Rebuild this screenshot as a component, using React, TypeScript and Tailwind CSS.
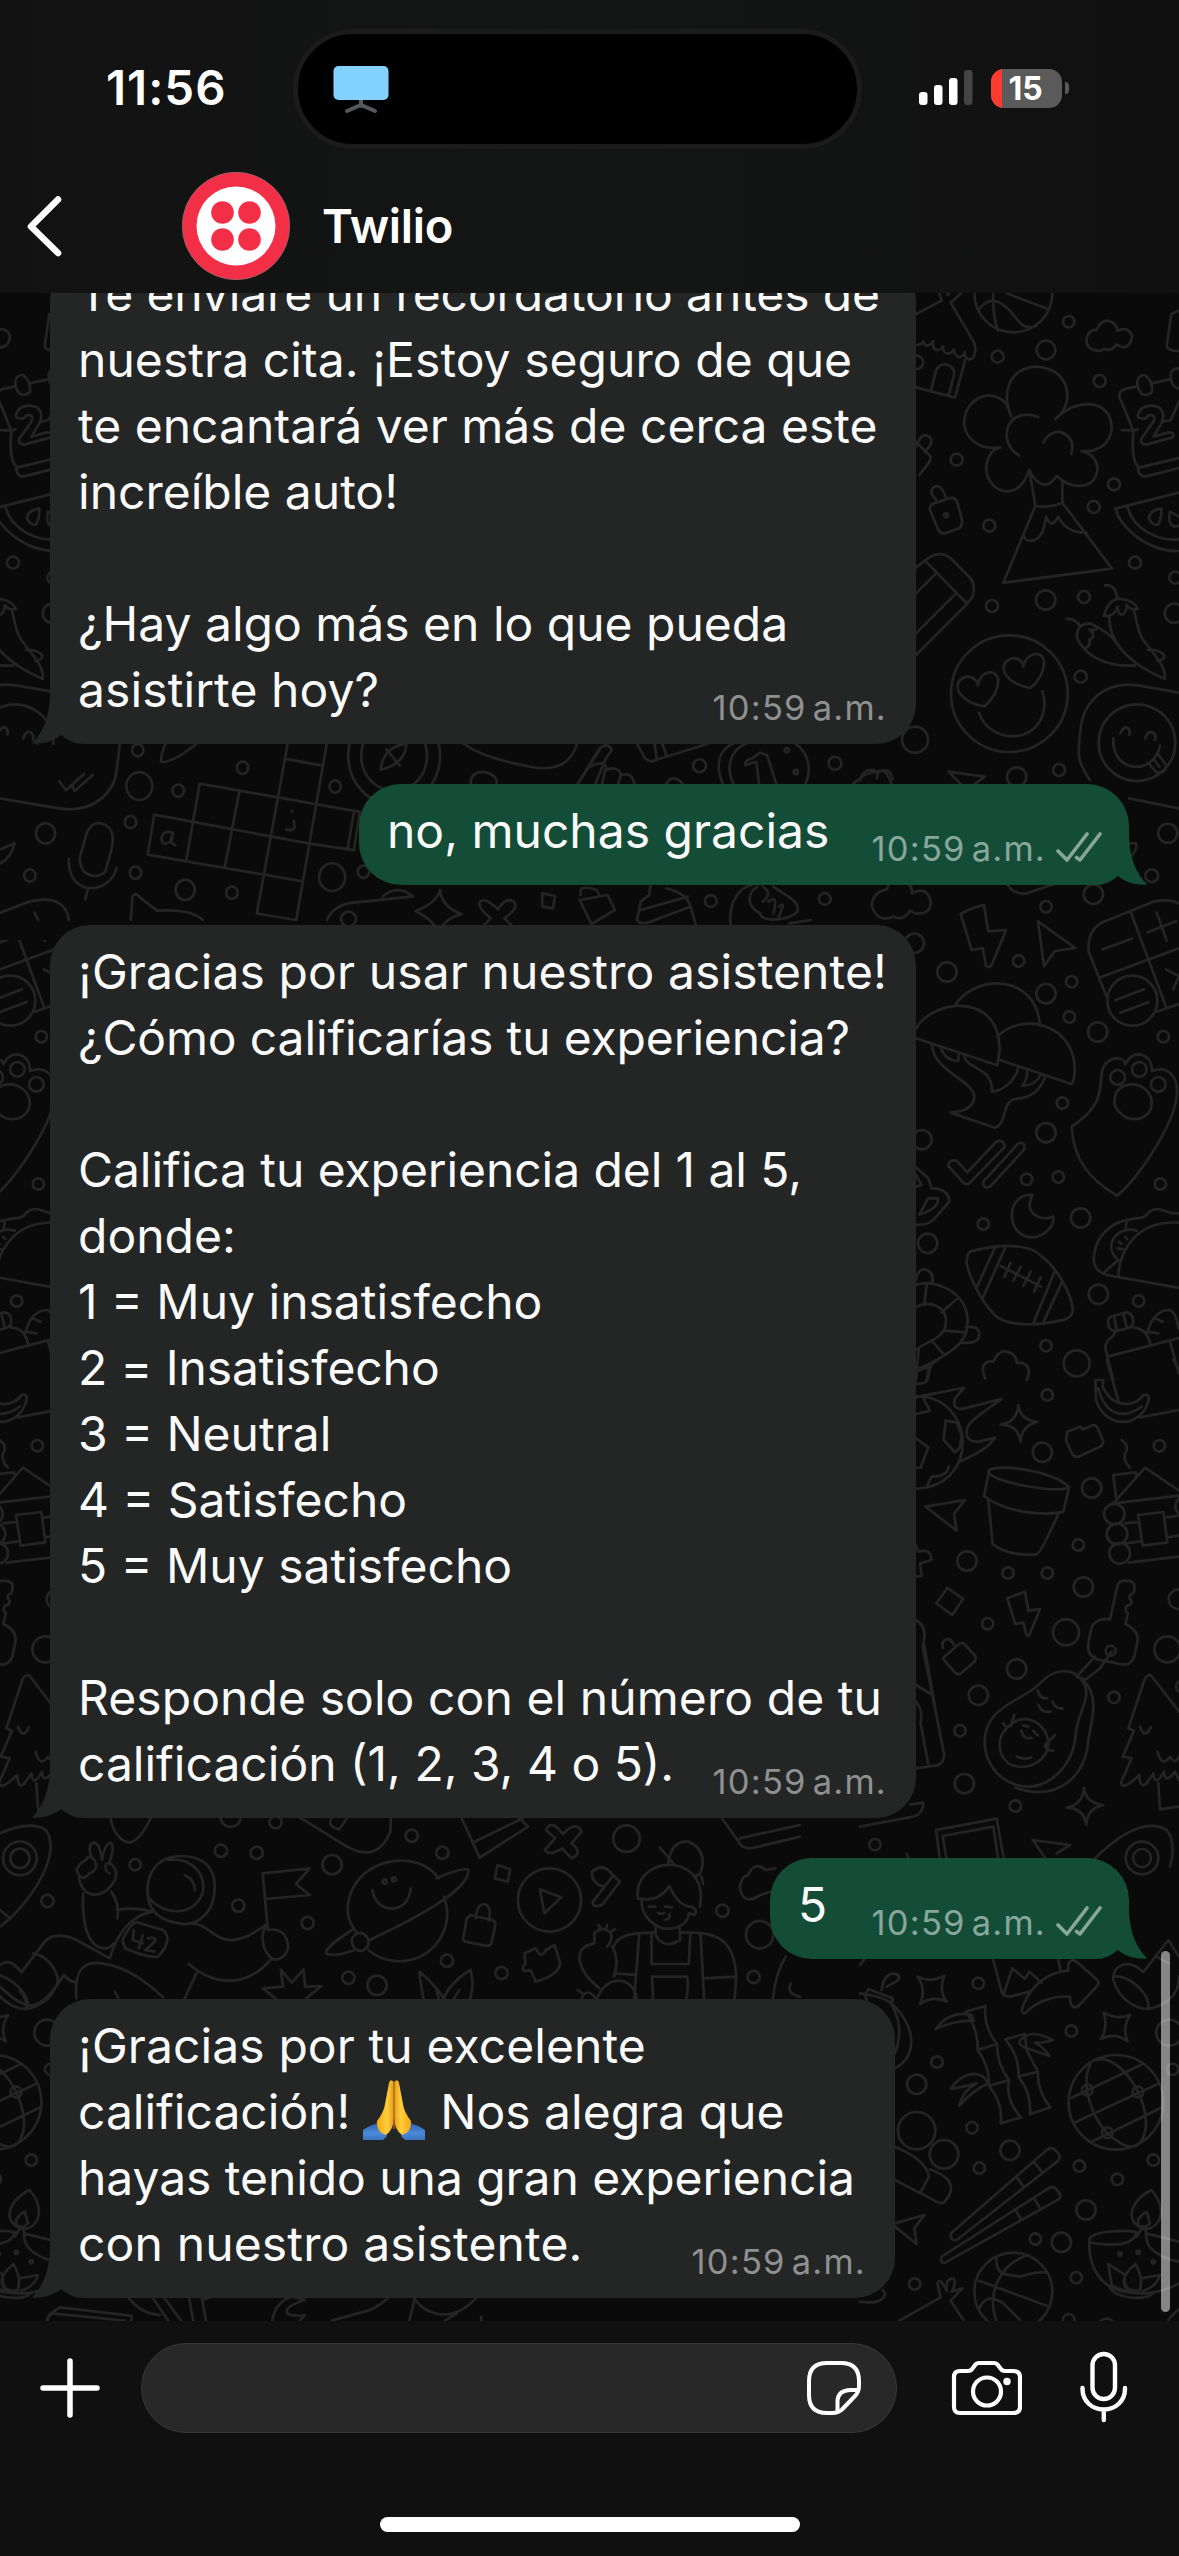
import type { ReactNode } from "react";

type Circle = [number, number, number];

function Dots({ items }: { items: Circle[] }) {
  return (
    <>
      {items.map(([x, y, r], i) => (
        <circle key={i} cx={x} cy={y} r={r} vectorEffect="non-scaling-stroke" />
      ))}
    </>
  );
}

function Lines({ items }: { items: string[] }) {
  return (
    <>
      {items.map((d, i) => (
        <path key={i} d={d} vectorEffect="non-scaling-stroke" />
      ))}
    </>
  );
}

/* Upper right: house, cloud volcano, padlock, calendar, melon, chillies, faces */
const upperDots: Circle[] = [
  [460, 40, 117], [626, 125, 17], [558, 210, 28], [413, 230, 18], [719, 303, 18], [290, 539, 18],
  [388, 737, 18], [762, 613, 18], [701, 681, 18], [825, 848, 18], [946, 893, 18], [943, 1000, 29],
  [396, 978, 18], [557, 960, 29], [672, 951, 18], [662, 1190, 18], [165, 1379, 39], [448, 1241, 175],
  [597, 1470, 18], [470, 1491, 29], [170, 247, 20], [831, 1388, 115], [258, 706, 6], [-30, 190, 20],
];
const upperLines = [
  "M400 30C398 80 402 120 414 152M355 92C380 50 415 55 450 92C480 130 490 150 530 138M440 40L562 86",
  "M0 190L245 62L238 40M262 45L268 40M308 35L272 68L332 170Q350 195 345 215Q342 240 326 238Q313 232 314 217Q308 235 294 230Q282 222 282 209Q270 226 255 218Q247 210 250 200Q235 217 223 206Q216 195 220 184Q205 202 195 194L190 184Q184 196 168 195",
  "M160 320L285 353L316 238M213 331L228 272Q238 250 262 254Q286 264 282 285L266 347",
  "M712 212Q678 208 679 178Q686 148 710 150Q722 120 745 122Q770 130 773 152Q806 138 816 168Q814 200 788 202L768 194Q752 218 732 206Q724 215 712 212Z",
  "M957 92L934 102L920 198Q922 212 957 213",
  "M454 410C425 350 440 262 532 260C630 270 640 360 600 405L586 417C650 350 755 358 755 445C752 490 715 518 665 513C710 525 720 560 707 590C690 625 635 630 590 588C565 625 535 625 508 570C490 620 465 634 441 634C385 632 355 555 402 510L422 502C340 515 308 455 313 420C320 350 400 320 441 375Z",
  "M534 411C480 390 440 420 440 465C440 490 455 515 477 526M550 487Q568 455 598 455Q648 470 634 522M508 570L526 678L430 908L756 866L607 668V603M526 678Q570 684 607 668M490 765Q495 784 514 782Q550 780 558 710Q575 750 594 710Q620 760 680 758",
  "M168 500L180 476Q190 460 208 470Q220 480 208 500L194 516M168 486L212 530L208 546L178 585",
  "M228 660L214 640Q215 618 232 618Q246 620 258 652M215 673L270 654Q286 650 292 668L306 720Q308 735 298 745L256 760Q242 762 235 750L210 690Q208 678 215 673Z",
  "M785 450L820 452L778 350Q776 330 800 326L828 320M874 310L930 298M820 452C815 520 820 555 840 562L957 534M834 565Q836 588 855 590L957 564M820 452L833 448",
  "M832 305Q835 284 855 285Q880 305 876 335Q864 350 846 342Q830 325 832 305ZM932 285Q935 264 955 265Q980 285 976 315Q964 330 946 322Q930 305 932 285Z",
  "M845 415Q822 415 845 385Q870 370 897 382Q918 400 904 430L880 470L926 457Q946 458 938 472L858 494Q838 492 845 475L880 425Q890 402 866 406L855 416ZM957 365L932 420L910 425",
  "M957 638L766 686C780 740 860 815 957 813M802 680C820 750 900 785 957 778M904 685Q870 690 866 715Q880 740 895 732Q905 715 904 685ZM930 695Q922 735 945 740Q975 735 960 712Z",
  "M168 862L195 842Q240 805 275 838L330 893Q348 915 338 950L318 975L168 1125M195 842L322 972M228 880L168 940M288 940L168 1060",
  "M735 916Q765 910 772 955M732 1008Q745 955 782 957Q822 960 834 987Q810 992 800 975Q800 1000 785 1005Q773 1000 773 980Q762 1012 732 1008M748 1010C745 1100 830 1160 914 1197C922 1160 870 1110 850 1080C830 1050 830 1020 822 990M864 1110Q900 1108 914 1128Q910 1142 892 1142",
  "M620 1017Q645 1014 660 1038M672 1105C635 1070 650 1030 690 1030L716 1043Q700 1055 688 1048Q712 1070 688 1078Q695 1100 672 1105C720 1160 800 1158 826 1156M716 1043Q745 1060 768 1085",
  "M374 1279C310 1270 275 1225 302 1198C325 1180 350 1195 354 1216C360 1170 410 1165 415 1200C415 1235 395 1260 374 1279ZM512 1224C448 1215 413 1170 440 1143C463 1125 488 1140 490 1160C498 1115 548 1110 552 1145C553 1180 533 1205 512 1224ZM357 1298C385 1390 540 1400 553 1280Q555 1255 547 1234",
  "M957 1238L835 1216C730 1200 670 1270 662 1345C650 1430 655 1450 690 1500M781 1360Q790 1338 802 1343Q812 1350 808 1365M856 1375Q864 1350 878 1357Q890 1365 885 1380M760 1375C755 1480 880 1490 900 1397M864 1448L890 1478Q920 1480 918 1455L893 1420M880 1436L898 1460",
  "M265 1475L375 1490L320 1530ZM0 1500Q10 1465 40 1470Q60 1475 50 1495M50 1480Q90 1455 98 1498",
];

/* Middle right: bolt, tree, paw, moon, football, taco */
const middleDots: Circle[] = [
  [163, 190, 29], [261, 276, 29], [558, 80, 17], [700, 43, 29], [476, 243, 17], [558, 341, 29], [635, 305, 17],
  [628, 411, 17], [713, 456, 29], [910, 470, 17], [607, 669, 17], [558, 758, 29], [186, 779, 29], [500, 898, 17],
  [595, 891, 17], [901, 912, 17], [370, 1032, 17], [662, 1014, 29], [203, 1090, 29], [715, 1243, 29], [836, 1263, 17],
  [558, 1397, 17], [650, 1450, 39], [817, 362, 75], [773, 592, 22], [838, 568, 22], [895, 613, 22],
];
const middleLines = [
  "M80 28Q90 -5 125 0Q158 10 156 40Q200 15 212 65Q212 105 165 100L150 92Q128 125 100 110Q50 130 35 75Q40 35 80 28ZM440 10Q460 45 500 40L590 10",
  "M302 102Q340 80 372 75L385 154L438 150L395 255Q388 265 378 258L368 204L335 210ZM534 124L646 204L585 213L552 258Z",
  "M957 372L890 395M740 350L686 215Q680 140 745 120L880 65Q930 55 957 70M812 95L918 380M722 292L957 205M728 208L815 176M863 157L948 124M890 98L920 182M918 268L957 288L940 328M767 360L852 328M781 398L866 366",
  "M285 376C345 280 530 280 540 438M168 445C225 350 430 340 418 520L412 556L168 475M412 470C490 390 660 435 643 590L636 613L420 540",
  "M215 495C225 580 345 600 343 655C335 690 300 695 272 698L405 743C440 735 425 665 465 657C525 655 545 620 555 590M313 528C320 570 400 560 396 636C440 630 470 590 475 562M243 505Q255 540 295 543L296 520M502 570Q502 600 487 617Q525 618 542 585",
  "M635 740C740 670 715 620 728 565C745 530 790 525 796 553C820 500 880 525 876 573C925 555 957 590 950 650C940 740 830 900 771 947C690 900 640 840 635 740Z",
  "M765 650C775 605 830 605 858 630C885 655 880 700 845 713C800 730 755 690 765 650Z",
  "M265 858Q264 838 290 842L322 877L408 786Q430 775 435 800L330 908Q320 918 308 906ZM370 905L475 790Q496 783 493 808L392 918Q368 930 370 905Z",
  "M517 945C435 940 435 1070 517 1072C555 1070 585 1035 580 1010C540 1025 490 1000 517 945Z",
  "M168 862L205 895L215 925Q265 925 268 965L220 1020Q195 1038 168 1034M168 885L185 915L168 920M204 955H234Q238 985 178 1004ZM168 1200Q175 1165 195 1168Q220 1172 218 1210",
  "M168 1214C230 1195 320 1240 323 1320C325 1410 240 1420 208 1460L168 1474M168 1280C210 1260 260 1280 258 1325C255 1380 200 1380 168 1410M200 1212L193 1275M290 1258L245 1297M320 1357L250 1352M252 1424L218 1385M318 1342Q358 1335 358 1365Q355 1395 300 1387M176 1410L168 1500M208 1460L200 1500",
  "M330 1115C420 1090 510 1090 545 1130C590 1160 635 1245 638 1285Q640 1310 615 1318C530 1340 430 1340 400 1300C360 1260 325 1180 320 1150Q320 1120 330 1115ZM405 1103L350 1222M437 1100L368 1255M585 1172L520 1330M605 1208L550 1327M422 1158L543 1220M452 1148L433 1190M482 1160L460 1203M512 1175L490 1218M542 1192L522 1235",
  "M957 1224L740 1185Q695 1170 702 1125C710 1060 760 1025 810 1018C840 1010 850 1020 865 998C900 970 915 1005 957 1000M775 1185C780 1110 830 1020 957 1028M830 1052C770 1035 725 1100 775 1140L735 1175M800 1020L797 1048M776 1085L785 1092M772 1105L790 1108M795 1070L802 1077",
  "M368 1470Q370 1440 400 1445Q415 1410 440 1415Q468 1420 470 1448Q505 1445 507 1478L500 1500M368 1470L375 1495",
  "M745 1330Q742 1310 760 1308L800 1297Q820 1300 820 1325Q820 1340 800 1345L765 1354Q745 1350 745 1330ZM762 1308L770 1350M790 1300L800 1343M765 1355L760 1368Q735 1385 736 1405L760 1500M820 1343Q860 1345 870 1390M742 1430L957 1374M862 1358Q880 1290 930 1290Q950 1300 955 1345M862 1355L895 1360M885 1315L908 1325M930 1385L957 1480",
];

/* Lower right: comet, pot, cabin, key ring, avocado, pine */
const lowerDots: Circle[] = [
  [562, 105, 17], [547, 277, 29], [898, 257, 17], [695, 384, 29], [655, 555, 17], [321, 603, 29], [444, 639, 17],
  [562, 639, 17], [670, 681, 29], [955, 718, 29], [383, 791, 17], [618, 817, 39], [922, 868, 39], [470, 927, 29],
  [355, 1006, 29], [762, 1012, 17], [300, 1112, 17], [313, 1271, 29], [466, 1338, 17], [45, 1454, 17], [763, 462, 31],
  [771, 522, 31], [779, 580, 31], [752, 872, 15], [846, 1494, 49], [846, 1494, 27], [965, 980, 17],
];
const lowerLines = [
  "M168 30L232 0M168 70Q205 75 205 45L212 20M168 112C230 100 270 90 312 84L285 115Q275 150 310 146L424 117L345 175C300 215 320 250 360 244L405 233C380 270 340 285 300 305M168 108C350 110 360 380 168 386M190 115L210 152L168 162M168 235L205 262L182 323L168 324M257 182L290 188L305 225L300 262L285 277L251 240ZM266 320Q260 350 215 350L200 380",
  "M475 135Q480 180 533 186Q485 195 482 246Q475 195 422 194Q472 185 475 135ZM672 1284Q677 1329 730 1335Q682 1344 679 1395Q672 1344 619 1343Q669 1334 672 1284Z",
  "M197 440L315 420L282 462L290 512Z",
  "M388 330L372 408C430 455 550 470 610 455L627 382C590 340 440 310 388 330C360 360 600 405 627 382M385 420L398 553Q450 590 530 583Q540 583 595 462",
  "M622 215L660 200L670 208L700 195Q710 195 714 207L730 245L725 258L655 290Q642 292 636 280L618 242Z",
  "M740 0L776 125M706 60H730L728 80C760 150 830 140 850 105Q868 100 866 118C850 200 740 215 708 120ZM715 85C735 165 790 180 845 140M957 150L840 172M940 0L957 30",
  "M785 240Q810 260 795 280Q790 305 810 323M768 410L760 345L828 337L830 352M760 430L855 323L957 392M760 430L957 407M795 490L835 486M790 551L842 544M805 608L957 590M834 465L910 456L922 547L848 557ZM915 473L957 467M920 532L957 527M957 415Q935 440 957 462",
  "M750 778L773 675Q780 655 815 665Q830 672 820 700Q800 708 815 722Q815 735 800 738Q792 752 804 760L796 792Q835 810 833 840L823 890Q810 920 780 912L710 898Q680 885 685 850L695 800Q715 770 750 778ZM705 890L650 950L675 960L720 925L755 875",
  "M168 555L175 575Q215 565 214 600L180 610L185 648L168 650M229 730L262 684L309 716L277 765ZM442 715L495 695L505 752L540 747L508 825Q500 832 498 820L490 787L466 792Z",
  "M250 865Q240 840 265 837Q280 845 285 860M250 893L300 850Q312 846 320 860L346 888Q350 900 340 908L300 942Q288 945 280 932L252 900Z",
  "M168 780Q200 800 192 840L188 860L252 1180Q255 1210 230 1216L168 1225M168 975L218 1005M168 1025Q190 1050 182 1090L205 1215M192 850L230 1070",
  "M540 970C580 925 640 920 668 965C700 1010 650 1060 648 1120C640 1220 560 1300 470 1275C370 1245 345 1120 410 1060C450 1020 500 1010 540 970ZM670 960C720 1010 695 1080 685 1140C680 1240 600 1330 465 1283",
  "M430 1090Q435 1105 452 1098L463 1065M445 1100C410 1130 410 1180 445 1210C500 1240 570 1200 565 1145C555 1080 485 1055 445 1100M585 1125L555 1155Q555 1165 565 1170L580 1172M533 992Q540 1018 562 1015M535 1035Q545 1060 572 1055M578 1025Q585 1048 607 1045M484 1112Q490 1140 514 1134M490 1096L505 1100M520 1113L533 1126M470 1190Q490 1200 513 1193",
  "M957 1055L875 948Q862 940 853 960L805 1105L822 1112L788 1190L815 1195L783 1268Q785 1295 838 1245Q840 1290 860 1270L880 1240Q885 1285 912 1235Q915 1275 945 1235L957 1260M895 1270L900 1348L957 1340M840 1100Q855 1140 872 1102M893 1175Q905 1225 930 1190Q945 1215 957 1190",
  "M0 1400L160 1370Q190 1360 190 1328L150 1333M240 1500L228 1410L410 1376L432 1500M260 1500L248 1428L400 1400L415 1500M518 1440L630 1455L590 1480M518 1440L560 1500M700 1500C780 1420 860 1375 920 1410Q950 1450 930 1520M140 1482L148 1500",
];

/* Bottom right: bamboo, globe, chopsticks, oil lamp, basketball */
const bottomDots: Circle[] = [
  [355, 130, 17], [231, 366, 17], [170, 433, 29], [634, 273, 17], [928, 278, 39], [938, 388, 17], [336, 563, 17],
  [450, 631, 29], [358, 684, 17], [170, 572, 56], [252, 643, 43], [658, 678, 17], [880, 660, 17], [772, 718, 17],
  [678, 810, 29], [526, 897, 17], [604, 907, 29], [649, 1013, 17], [164, 1032, 17], [460, 1055, 117], [768, 487, 142],
  [682, 450, 16], [834, 456, 16], [742, 578, 16], [626, 1139, 17], [740, 1162, 26], [780, 942, 5], [835, 937, 5], [880, 965, 5],
];
const bottomLines = [
  "M173 110Q210 130 253 107Q235 150 260 185Q220 165 180 192Q200 150 173 110ZM731 218Q768 240 810 225Q785 265 803 304Q765 275 723 297Q745 260 731 218Z",
  "M20 180L15 165L25 147L98 175L95 195M0 160Q80 170 105 200C170 270 170 350 105 385M95 195Q135 260 105 340M65 150Q70 105 100 100Q130 105 108 125L80 140",
  "M400 60L425 155Q430 170 450 170L510 155M430 165L457 85L495 117L508 95L545 128M595 60L603 95M487 215C480 205 520 100 625 92V70Q635 55 650 65L712 120Q720 130 710 140L655 198Q630 212 630 170C570 165 520 195 500 215Q490 225 487 215Z",
  "M957 50L925 0L850 96C800 50 755 80 760 120C780 190 850 220 890 200C940 180 957 150 957 110M890 50L925 70M762 110C800 100 870 160 865 200",
  "M318 215L376 198Q370 260 411 312Q410 370 447 420Q435 480 483 532L422 550Q430 490 387 438Q390 380 353 330Q355 280 330 235ZM353 330L411 312M387 438L447 420M436 298L495 282L500 330Q520 370 534 395Q530 450 571 502L510 523Q515 460 475 410Q480 350 436 298ZM475 410L534 395M227 267Q270 210 335 225L342 242Q285 240 227 267ZM272 447C310 390 365 390 385 430Q340 450 298 497Q310 450 350 430Q310 440 272 447ZM578 300Q520 270 495 290Q460 310 500 325L568 348Q555 325 525 308Q550 310 578 300Z",
  "M635 473L847 373M646 547L898 430M695 605L904 503M690 375C660 440 700 560 775 605Q800 625 825 618M710 360C760 340 860 440 858 560Q850 610 825 618",
  "M105 620Q200 660 207 710L182 755M105 720L230 785Q250 795 258 780C290 740 270 710 210 688M105 850L193 825L163 865L170 912L105 860",
  "M273 880L560 630Q575 618 590 633L600 650L595 662L290 900Q270 905 273 880ZM523 667L545 695M471 713L492 742M245 950L565 745Q580 735 592 750L602 768L596 778L255 968Q238 970 245 950ZM522 775L540 804M465 808L482 837",
  "M688 905C680 870 800 870 830 877Q820 918 740 913Q695 912 688 905C685 980 720 1040 790 1055C870 1070 920 1050 957 1030M830 890L848 862M858 862Q855 900 870 922Q900 955 957 965M858 880L957 905M855 867C790 850 810 780 875 750C925 810 900 865 855 867M860 815Q825 835 837 857Q855 865 870 850ZM745 972L795 1005Q790 1040 812 1052Q770 1050 755 1035ZM826 972Q850 1010 840 1050Q820 1058 795 1040Q780 1010 826 972ZM845 1015L900 1005Q890 1040 848 1053M748 1040C760 1075 860 1085 878 1060",
  "M410 950Q405 1005 450 1005C500 1020 500 990 562 998M505 945C420 970 380 1060 408 1140M357 1022L562 1098M358 1105Q380 1055 430 1090L480 1140",
  "M118 1142L242 1072L232 1030Q240 1010 260 1052Q255 1015 280 1015Q290 1030 275 1055L307 1045L272 1082L310 1140M0 1085Q70 1095 75 1060L68 1050M925 1140L940 1122L957 1108M0 75L15 55",
];

/* Upper left: speech bubble tail, ticks, crossword, microphone, compass */
const leftDots: Circle[] = [
  [360, 1152, 15], [364, 1240, 34], [466, 1251, 15], [634, 1195, 15], [876, 1241, 15], [341, 1328, 15], [119, 1356, 25],
  [78, 1459, 15], [354, 1452, 15], [484, 1494, 25], [606, 1501, 15], [868, 1463, 34], [950, 1450, 15], [1030, 1166, 120], [1030, 1166, 86],
];
const leftLines = [
  "M0 1270L150 1294C250 1310 300 1250 305 1200L314 1130M155 1228L172 1250L220 1210M190 1242L195 1252L243 1212",
  "M753 1130L671 1552L774 1568L855 1130M748 1174L841 1189M522 1234L940 1303L925 1397M522 1234L487 1420M626 1250L588 1436M403 1310L810 1381L925 1397M386 1408L403 1310M386 1408L790 1473M926 1300L908 1395",
  "M420 1180Q425 1140 440 1130M420 1180Q450 1185 515 1135M995 1200Q1000 1145 1062 1136Q1060 1185 995 1200ZM1010 1150L1045 1190M1205 1130Q1250 1170 1400 1195Q1490 1205 1510 1130M1510 1235L1568 1150M1230 1235Q1230 1205 1262 1205Q1300 1210 1298 1235",
  "M225 1360Q240 1320 275 1335Q305 1350 290 1400L275 1450Q250 1470 220 1450Q205 1430 210 1410ZM180 1418C175 1510 285 1510 305 1440M230 1490L223 1518M0 1395L38 1380Q30 1415 0 1430M0 1550L70 1525Q170 1500 180 1568M90 1550L100 1568",
  "M342 1568L346 1510Q355 1498 365 1512L410 1545Q500 1540 530 1568M855 1568Q870 1530 930 1525L1080 1510M1000 1510Q1040 1480 1078 1510",
  "M452 1355Q425 1345 422 1370Q425 1390 445 1375L452 1355L448 1378L458 1385M764 1302V1304M768 1325L770 1340Q765 1352 748 1346",
];

/* Strip around the first outgoing message */
const middleStripDots: Circle[] = [
  [672, 137, 12], [925, 130, 12], [693, 543, 11], [906, 537, 11], [16, 597, 14], [835, 91, 4], [852, 156, 4], [1547, 340, 18], [1517, 467, 12],
];
const middleStripLines = [
  "M445 190L485 85Q500 65 508 90L495 120L478 190M468 140Q490 120 497 140L490 190M497 150Q520 135 525 165L520 190M525 165Q545 155 550 190M555 70L570 115Q580 130 590 120L690 70M588 72L592 118M602 70L610 105",
  "M715 190C700 130 710 90 735 70M850 70C880 100 880 160 870 190M735 190C720 140 730 90 760 70M758 135Q755 120 770 115L785 98L798 105L815 190M758 135L778 125L783 190M610 190Q623 160 640 190M960 190L980 165Q995 155 1005 155Q1020 140 1030 190",
  "M187 510Q190 560 227 582Q190 600 186 640Q175 600 141 573Q180 550 187 510ZM262 545Q270 530 295 568Q310 530 325 545Q335 565 307 595L320 614M262 545Q255 560 282 595L270 614M378 520L402 528L398 565L378 560ZM448 540L500 525L514 570L470 612ZM450 525Q445 490 480 510L485 528",
  "M580 495L578 525L562 545L555 600Q560 615 580 605L655 560Q650 520 610 505M562 570L650 530M655 560L665 614M730 614C725 540 750 500 770 495M780 500C760 520 760 560 785 580C790 610 840 600 855 575C860 540 830 525 810 500M790 500Q810 520 790 545M800 545Q820 520 810 580M820 560Q835 540 820 590M840 610L880 600",
  "M1475 235L1568 265M1475 370L1488 370Q1490 390 1478 410",
];

/* Strip with astronaut, planet and gardener */
const strollDots: Circle[] = [
  [265, 314, 11], [433, 272, 12], [503, 278, 12], [651, 314, 19], [807, 227, 12], [867, 278, 12], [467, 437, 12], [603, 489, 12],
  [93, 423, 12], [1228, 236, 26], [1077, 420, 62], [876, 602, 12], [683, 653, 12], [739, 676, 19], [983, 639, 12],
  [1416, 452, 12], [1477, 651, 12], [1489, 524, 27], [452, 170, 20], [540, 187, 12], [754, 365, 4], [772, 358, 4],
  [39, 295, 33], [39, 295, 19],
];
const strollLines = [
  "M217 175C220 215 240 250 255 247Q275 240 295 175M580 165L680 260Q740 310 765 215L766 175M650 175Q640 200 665 208L680 175",
  "M905 175L940 293L1035 200L1012 165M930 245L1025 175M1070 210Q1080 175 1103 222Q1130 180 1140 215L1120 250Q1145 280 1120 295L1102 265Q1075 290 1068 270L1088 235Z",
  "M1415 175L1450 250Q1455 268 1475 264L1568 230M1450 235L1568 195",
  "M180 295Q170 250 185 248Q195 250 200 300Q205 250 218 248Q225 265 215 305M185 300Q175 280 168 300Q155 310 150 330Q160 370 175 340Q195 330 185 300M155 345C155 410 200 430 225 360C235 320 210 300 207 315Q205 335 215 340M163 400C160 480 170 570 210 565Q220 560 222 550M218 395Q235 430 230 475",
  "M355 288C410 290 425 340 420 400C415 470 380 500 350 490C300 480 285 430 290 370Q300 290 355 288M330 300C380 290 405 350 397 400C380 470 320 470 290 410M362 345Q382 360 382 390",
  "M230 450Q260 440 300 455Q240 470 215 595L150 540Q105 510 85 550L42 637Q20 590 0 615M240 540Q260 480 270 488L320 510Q340 540 310 590Q290 595 245 565ZM262 510L260 540L280 550M280 525L272 565M290 535Q310 530 303 545L285 570L303 575M375 490C420 490 430 600 520 495M515 340L525 510Q560 500 565 560Q560 600 535 598C510 570 510 510 525 495M515 340L607 325L580 372L607 405L520 417",
  "M65 580C100 590 120 650 110 680C70 760 50 750 0 680M0 645C40 670 60 720 52 745M370 612C430 690 490 670 530 600M385 640L362 715M150 715C145 640 160 600 200 610C250 620 290 670 320 712M110 680L125 645Q140 670 150 665M225 695L232 715",
  "M860 355C820 270 720 290 690 390C670 460 690 500 700 520M722 570C760 620 830 620 865 530Q885 470 870 410M855 355Q910 320 918 330C920 380 850 450 725 540M690 510C650 550 635 570 640 582Q660 590 695 570M705 518Q725 525 722 555Q710 585 695 565Q680 530 705 518ZM730 390C735 460 800 470 805 385",
  "M515 685L555 680L550 628L572 668L595 628L598 680L630 678L600 715M515 685L540 715M822 635Q850 670 870 715M822 635Q825 680 830 715M922 630Q880 670 870 715M922 630Q930 670 922 715M855 690L860 715M900 690L890 715",
  "M975 315L1000 328L995 365L970 355ZM933 475Q935 430 950 433Q965 440 958 482M922 465L965 480Q973 485 970 500L963 550Q960 560 948 556L912 545Q905 540 909 525L915 475ZM1058 388L1100 412L1067 460ZM1160 335Q1180 310 1195 335L1215 365L1180 435Q1160 445 1162 425L1200 350M1160 335Q1160 370 1182 380",
  "M1028 580L1050 565Q1060 600 1070 570L1087 555L1098 610Q1095 645 1050 665L1040 630Q1015 640 1030 610Z",
  "M1310 310Q1315 240 1350 245Q1385 270 1375 330Q1370 350 1365 345M1293 262L1320 310M1375 350L1378 372M1250 415C1245 350 1280 310 1320 315C1360 325 1380 370 1372 440M1250 415Q1290 430 1312 378Q1330 440 1355 440Q1370 450 1360 465L1350 460C1350 500 1310 520 1285 495C1260 470 1257 440 1258 420M1285 500L1285 525Q1300 570 1333 540L1332 500M1272 440L1285 440M1303 440L1317 442M1290 458Q1295 465 1302 458M1312 462Q1315 478 1303 480",
  "M1285 518Q1210 515 1203 560M1335 518C1420 510 1440 560 1443 650L1380 655M1443 650L1440 715M1205 640L1245 645M1253 520L1243 715M1373 520L1380 715M1277 520L1277 612H1350L1353 520M1278 650H1347Q1350 690 1345 715M1278 650L1280 715M1165 520Q1180 495 1198 520Q1200 545 1190 560M1165 520V550C1120 560 1130 630 1175 685M1200 560Q1215 600 1203 650M1170 715Q1190 650 1225 665Q1245 680 1248 715M1140 715Q1150 680 1168 715M1172 495L1178 505M1190 495L1188 505M1205 508L1198 514M1132 690L1142 700",
  "M1450 380Q1455 345 1465 348Q1480 300 1500 330L1520 325M1450 380Q1455 440 1490 405L1510 395M1540 590Q1520 640 1515 715M1550 670Q1540 700 1568 710",
  "M0 220Q60 180 90 210C120 280 70 400 20 475L0 450M0 500L20 475",
];

/* Strip just above the composer */
const baseLines = [
  "M385 292Q420 340 480 345M457 292L505 362M492 292L543 362M567 292L580 362M605 292L618 362M610 300L630 292M143 362Q140 345 160 335L180 322L390 347Q400 350 393 362M155 340L375 362",
  "M817 362Q825 310 870 292M885 292L915 300Q850 320 862 340Q880 352 915 345L900 362M995 362L1110 330Q1150 310 1165 292M1245 292L1228 362M1240 292C1280 350 1360 370 1430 292M1335 362L1370 340M1443 350L1445 362",
];

function Wallpaper() {
  return (
    <svg className="absolute inset-0 h-full w-full" viewBox="0 293 1179 2028" fill="none" aria-hidden="true">
      <defs>
        <g id="right-column">
          <g transform="translate(860 280) scale(.33333)">
            <Dots items={upperDots} />
            <Lines items={upperLines} />
          </g>
          <g transform="translate(860 880) scale(.33333)">
            <Dots items={middleDots} />
            <Lines items={middleLines} />
          </g>
          <g transform="translate(860 1360) scale(.33333)">
            <Dots items={lowerDots} />
            <Lines items={lowerLines} />
          </g>
          <g transform="translate(860 1940) scale(.33333)">
            <Dots items={bottomDots} />
            <Lines items={bottomLines} />
          </g>
        </g>
        <clipPath id="left-edge">
          <path d="M0 293H56V745H0ZM0 940H56V1818H0ZM0 1990H56V2321H0Z" />
        </clipPath>
      </defs>
      <g stroke="#242424" strokeWidth="2.7" strokeLinecap="round" strokeLinejoin="round">
        <use href="#right-column" />
        <g clipPath="url(#left-edge)">
          <use href="#right-column" x="-1122" />
        </g>
        <g transform="translate(0 280) scale(.38265 .40816)">
          <Dots items={leftDots} />
          <Lines items={leftLines} />
        </g>
        <g transform="translate(340 720) scale(.53508 .33333)">
          {middleStripDots.map(([x, y, r], i) => (
            <ellipse key={i} cx={x} cy={y} rx={r} ry={r * 1.6} vectorEffect="non-scaling-stroke" />
          ))}
          <Lines items={middleStripLines} />
        </g>
        <g transform="translate(0 1760) scale(.5102 .33333)">
          {strollDots.map(([x, y, r], i) => (
            <ellipse key={i} cx={x} cy={y} rx={r} ry={r * 1.53} vectorEffect="non-scaling-stroke" />
          ))}
          <Lines items={strollLines} />
        </g>
        <g transform="translate(0 2200) scale(.33333)">
          <Lines items={baseLines} />
        </g>
      </g>
    </svg>
  );
}

function Tail({ side }: { side: "left" | "right" }) {
  return (
    <svg
      className={
        side === "left"
          ? "absolute bottom-0 -left-[18px] h-[60px] w-[60px] text-[#242626]"
          : "absolute bottom-0 -right-[18px] h-[60px] w-[60px] -scale-x-100 text-[#144d37]"
      }
      viewBox="0 0 60 60"
      fill="currentColor"
    >
      <path d="M18 0V12C17 34 11 48 0 59.5C12 60.5 22 57 29 51L40 20V0Z" />
    </svg>
  );
}

function Time({ children }: { children?: ReactNode }) {
  return (
    <div className="absolute right-[29px] bottom-[16px] flex h-[40px] items-center text-[34.5px] leading-[40px] tracking-[1.2px] whitespace-nowrap">
      <span>10:59</span>
      <span className="ml-[6px]">a.m.</span>
      {children}
    </div>
  );
}

function Ticks() {
  return (
    <svg className="-mr-[2px] ml-[10px] h-[40px] w-[46px]" viewBox="0 0 46 40" fill="none" stroke="currentColor" strokeWidth="3.6" strokeLinecap="round" strokeLinejoin="round">
      <path d="M2 22L11 31L31 5M20.5 28.5L24 31L44 5" />
    </svg>
  );
}

function Incoming({ className, children }: { className: string; children: ReactNode }) {
  return (
    <div className={`relative ml-[50px] shrink-0 rounded-[40px] rounded-bl-[34px] bg-[#242626] px-[28px] pb-[21px] text-[#fafafa] ${className}`}>
      <Tail side="left" />
      <div className="relative">{children}</div>
      <div className="text-[#8f9191]">
        <Time />
      </div>
    </div>
  );
}

function Outgoing({ className, children }: { className: string; children: ReactNode }) {
  return (
    <div className={`relative mr-[50px] h-[101.5px] shrink-0 self-end rounded-[42px] rounded-br-[34px] bg-[#144d37] px-[28px] pt-[14px] text-[#fafafa] ${className}`}>
      <Tail side="right" />
      <div className="relative">{children}</div>
      <div className="text-[#89a69b]">
        <Time>
          <Ticks />
        </Time>
      </div>
    </div>
  );
}

function Line({ children, className = "" }: { children?: ReactNode; className?: string }) {
  return <div className={`h-[66px] text-[48px] leading-[66px] whitespace-nowrap ${className}`}>{children}</div>;
}

function FoldedHands() {
  return (
    <svg className="mx-[14px] -ml-[-12px] inline-block h-[62px] w-[64px] align-[-12px]" viewBox="0 0 64 62">
      <defs>
        <linearGradient id="skin-left" x1="0" x2="1">
          <stop offset="0" stopColor="#f3a712" />
          <stop offset="0.6" stopColor="#ffcf3a" />
          <stop offset="1" stopColor="#e39a1c" />
        </linearGradient>
        <linearGradient id="skin-right" x1="1" x2="0">
          <stop offset="0" stopColor="#f3a712" />
          <stop offset="0.6" stopColor="#ffcf3a" />
          <stop offset="1" stopColor="#e39a1c" />
        </linearGradient>
        <linearGradient id="sleeve" x1="0" x2="0" y1="0" y2="1">
          <stop offset="0" stopColor="#2f62ad" />
          <stop offset="0.6" stopColor="#4d8ad8" />
          <stop offset="1" stopColor="#3a72bf" />
        </linearGradient>
      </defs>
      <path d="M1 51Q8 46 16 44L25 57L21 61H1ZM63 51Q56 46 48 44L39 57L43 61H63Z" fill="url(#sleeve)" />
      <path d="M32 3Q28-1 27 4L23 25Q22 33 15 42Q14 53 24 56Q32 50 32 38Z" fill="url(#skin-left)" />
      <path d="M32 3Q36-1 37 4L41 25Q42 33 49 42Q50 53 40 56Q32 50 32 38Z" fill="url(#skin-right)" />
      <path d="M32 3V50" stroke="#a9661a" strokeWidth="1.4" />
    </svg>
  );
}

function Header() {
  return (
    <header className="relative h-[293px] shrink-0 bg-linear-to-r from-[#121212] via-[#141515] to-[#101010] text-white">
      <div className="absolute top-[29px] left-[293px] flex h-[120px] w-[569px] items-center rounded-[60px] border-[5px] border-[#1b1b1b] bg-black pl-[35px]">
        <svg className="h-[50px] w-[56px]" viewBox="0 0 56 50" fill="none">
          <path d="M28 35V42M14 47L28 41L42 47" stroke="#55585a" strokeWidth="4" strokeLinecap="round" />
          <rect x="0.5" y="2" width="55" height="34" rx="5" fill="#84d2ff" />
        </svg>
      </div>
      <div className="flex h-[176px] items-center justify-between pr-[110px] pl-[106px]">
        <div className="text-[47.5px] leading-[60px] font-semibold tracking-[1px]">11:56</div>
        <div className="flex items-center">
          <svg className="mr-[18px] h-[36px] w-[54px]" viewBox="0 0 54 36" fill="white">
            <rect x="0" y="22" width="8.5" height="13" rx="3" />
            <rect x="15" y="15" width="8.5" height="20" rx="3" />
            <rect x="30" y="8" width="8.5" height="27" rx="3" />
            <rect x="45" y="0" width="8.5" height="35" rx="3" fill="#444444" />
          </svg>
          <div className="relative h-[39px] w-[71px] overflow-hidden rounded-[13px] bg-[#5a5a5a]">
            <div className="h-full w-[11px] bg-[#ff3b30]" />
            <div className="absolute inset-0 pr-[2px] text-center text-[32px] leading-[39px] font-bold">15</div>
          </div>
          <div className="ml-[3px] h-[12px] w-[4px] rounded-r-full bg-[#5a5a5a]" />
        </div>
      </div>
      <div className="flex h-[100px] items-center pl-[27px]">
        <svg className="h-[62px] w-[36px]" viewBox="0 0 36 62" fill="none" stroke="white" strokeWidth="6.6" strokeLinecap="round" strokeLinejoin="round">
          <path d="M31 4.500L4 31.500L31 58" />
        </svg>
        <svg className="ml-[119px] h-[108px] w-[108px]" viewBox="0 0 108 108">
          <circle cx="54" cy="54" r="53.700" fill="#f22f46" stroke="#a66a70" strokeWidth="0.8" />
          <circle cx="54" cy="54" r="39.500" fill="white" />
          <g fill="#f22f46">
            <circle cx="40.500" cy="40.500" r="11.300" />
            <circle cx="67.500" cy="40.500" r="11.300" />
            <circle cx="40.500" cy="67.500" r="11.300" />
            <circle cx="67.500" cy="67.500" r="11.300" />
          </g>
        </svg>
        <h1 className="ml-[32px] text-[47px] leading-[60px] font-semibold tracking-[-0.35px]">Twilio</h1>
      </div>
    </header>
  );
}

function Composer() {
  return (
    <footer className="relative flex h-[235px] shrink-0 items-start bg-[#101010] text-white">
      <svg className="mt-[37px] ml-[40px] h-[60px] w-[60px]" viewBox="0 0 60 60" stroke="currentColor" strokeWidth="5.5" strokeLinecap="round">
        <path d="M30 3V57M3 30H57" />
      </svg>
      <div className="mt-[22px] ml-[41px] flex h-[90px] w-[756px] items-center justify-end rounded-full border-[1.5px] border-[#383838] bg-[#282828] pr-[34px]">
        <svg className="h-[56px] w-[56px]" viewBox="0 0 56 56" fill="none" stroke="currentColor" strokeWidth="4" strokeLinejoin="round">
          <path d="M21 3H35Q53 3 53 21V26Q53 32 49 36L36.500 49Q33 53 26 53H21Q3 53 3 35V21Q3 3 21 3ZM53 30H45Q31.500 30 31.500 42V52" />
        </svg>
      </div>
      <svg className="mt-[38px] ml-[54px] h-[58px] w-[71px]" viewBox="0 0 71 58" fill="none" stroke="currentColor" strokeWidth="4.2" strokeLinejoin="round">
        <path d="M9 12H17Q20 12 21.500 9.500L24.500 5.500Q26 4 28 4H43Q45 4 46.500 5.500L49.500 9.500Q51 12 54 12H62Q69 12 69 18V48Q69 54 62 54H9Q3 54 3 48V18Q3 12 9 12Z" />
        <circle cx="36" cy="32.500" r="14" />
        <circle cx="56" cy="22.500" r="3.700" fill="currentColor" stroke="none" />
      </svg>
      <svg className="mt-[30px] ml-[58px] h-[72px] w-[48px]" viewBox="0 0 48 72" fill="none" stroke="currentColor" strokeWidth="4.4" strokeLinecap="round">
        <rect x="12.500" y="3" width="22.500" height="45" rx="11.250" />
        <path d="M2.500 37V38C2.500 50 12 58.500 23.800 58.500C35.500 58.500 45 50 45 38V37M23.800 59V69" />
      </svg>
      <div className="absolute bottom-[24px] left-[380px] h-[15px] w-[420px] rounded-full bg-white" />
    </footer>
  );
}

export default function App() {
  return (
    <div className="flex h-[2556px] w-[1179px] flex-col overflow-hidden bg-[#0a0a0a] font-['Inter','Liberation_Sans',sans-serif]">
      <Header />
      <main className="relative h-[2028px] shrink-0 overflow-hidden bg-[#0a0a0a]">
        <Wallpaper />
        <div className="relative flex h-full flex-col justify-end gap-[39.7px] pb-[23px]">
          <Incoming className="w-[866px]">
            <Line className="tracking-[-0.1px]">Te enviaré un recordatorio antes de</Line>
            <Line className="tracking-[0.05px]">nuestra cita. ¡Estoy seguro de que</Line>
            <Line>te encantará ver más de cerca este</Line>
            <Line>increíble auto!</Line>
            <Line />
            <Line>¿Hay algo más en lo que pueda</Line>
            <Line className="tracking-[0.1px]">asistirte hoy?</Line>
          </Incoming>
          <Outgoing className="w-[770px]">
            <Line>no, muchas gracias</Line>
          </Outgoing>
          <Incoming className="w-[866px] pt-[13.8px]">
            <Line className="tracking-[0.12px]">¡Gracias por usar nuestro asistente!</Line>
            <Line className="tracking-[-0.14px]">¿Cómo calificarías tu experiencia?</Line>
            <Line />
            <Line className="tracking-[-0.08px]">Califica tu experiencia del 1 al 5,</Line>
            <Line>donde:</Line>
            <Line>1 = Muy insatisfecho</Line>
            <Line className="tracking-[-0.1px]">2 = Insatisfecho</Line>
            <Line>3 = Neutral</Line>
            <Line>4 = Satisfecho</Line>
            <Line>5 = Muy satisfecho</Line>
            <Line />
            <Line className="tracking-[0.08px]">Responde solo con el número de tu</Line>
            <Line>calificación (1, 2, 3, 4 o 5).</Line>
          </Incoming>
          <Outgoing className="w-[359px]">
            <Line>5</Line>
          </Outgoing>
          <Incoming className="w-[845px] pt-[14.3px]">
            <Line className="tracking-[0.1px]">¡Gracias por tu excelente</Line>
            <Line>
              calificación!
              <FoldedHands />
              Nos alegra que
            </Line>
            <Line className="tracking-[-0.06px]">hayas tenido una gran experiencia</Line>
            <Line className="tracking-[0.15px]">con nuestro asistente.</Line>
          </Incoming>
        </div>
        <div className="absolute top-[1658px] right-[9px] h-[361px] w-[9px] rounded-full bg-white/50" />
      </main>
      <Composer />
    </div>
  );
}
